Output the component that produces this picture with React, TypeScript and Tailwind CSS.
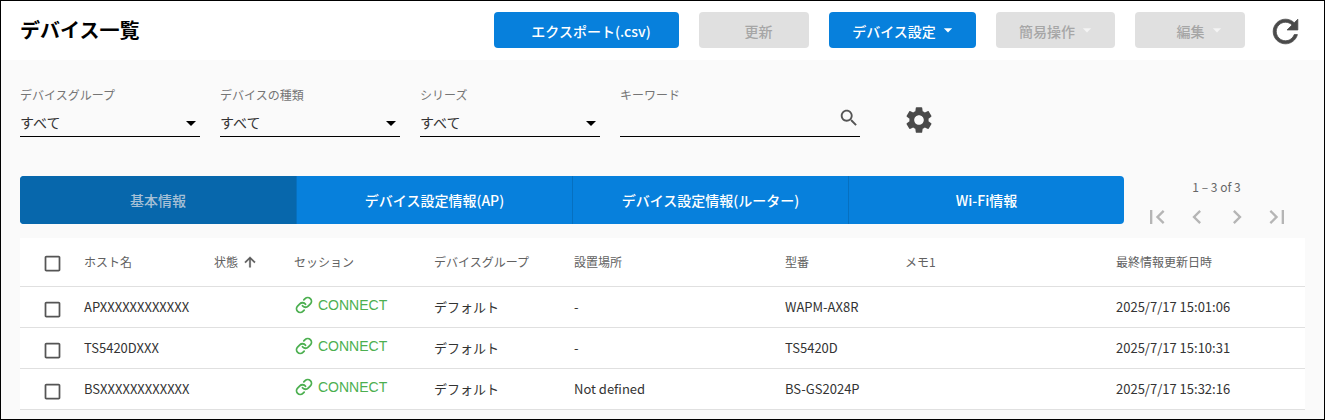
const FONT = "font-['Noto_Sans_CJK_JP','Noto_Sans',sans-serif]";

function I({ d, className, sw }: { d: string; className?: string; sw?: number }) {
  return (
    <svg viewBox="0 0 24 24" fill="currentColor" stroke={sw ? "currentColor" : "none"} strokeWidth={sw} className={className}>
      <path d={d} />
    </svg>
  );
}

const P = {
  drop: "M7 10l5 5 5-5z",
  refresh:
    "M17.65 6.35C16.2 4.9 14.21 4 12 4c-4.42 0-7.99 3.58-7.99 8s3.57 8 7.99 8c3.73 0 6.84-2.55 7.73-6h-2.08c-.82 2.33-3.04 4-5.65 4-3.31 0-6-2.69-6-6s2.69-6 6-6c1.66 0 3.14.69 4.22 1.78L13 11h7V4l-2.35 2.35z",
  search:
    "M15.5 14h-.79l-.28-.27C15.41 12.59 16 11.11 16 9.5 16 5.91 13.09 3 9.5 3S3 5.91 3 9.5 5.91 16 9.5 16c1.61 0 3.09-.59 4.23-1.57l.27.28v.79l5 4.99L20.49 19l-4.99-5zm-6 0C7.01 14 5 11.99 5 9.5S7.01 5 9.5 5 14 7.01 14 9.5 11.99 14 9.5 14z",
  gear:
    "M19.14 12.94c.04-.3.06-.61.06-.94 0-.32-.02-.64-.07-.94l2.03-1.58c.18-.14.23-.41.12-.61l-1.92-3.32c-.12-.22-.37-.29-.59-.22l-2.39.96c-.5-.38-1.03-.7-1.62-.94l-.36-2.54c-.04-.24-.24-.41-.48-.41h-3.84c-.24 0-.43.17-.47.41l-.36 2.54c-.59.24-1.13.57-1.62.94l-2.39-.96c-.22-.08-.47 0-.59.22L2.74 8.87c-.12.21-.08.47.12.61l2.03 1.58c-.05.3-.09.63-.09.94s.02.64.07.94l-2.03 1.58c-.18.14-.23.41-.12.61l1.92 3.32c.12.22.37.29.59.22l2.39-.96c.5.38 1.03.7 1.62.94l.36 2.54c.05.24.24.41.48.41h3.84c.24 0 .44-.17.47-.41l.36-2.54c.59-.24 1.13-.56 1.62-.94l2.39.96c.22.08.47 0 .59-.22l1.92-3.32c.12-.22.07-.47-.12-.61l-2.01-1.58zM12 15.6c-1.98 0-3.6-1.62-3.6-3.6s1.62-3.6 3.6-3.6 3.6 1.62 3.6 3.6-1.62 3.6-3.6 3.6z",
  box: "M19 5v14H5V5h14m0-2H5c-1.1 0-2 .9-2 2v14c0 1.1.9 2 2 2h14c1.1 0 2-.9 2-2V5c0-1.1-.9-2-2-2z",
  up: "M4 12l1.41 1.41L11 7.83V20h2V7.83l5.58 5.59L20 12l-8-8-8 8z",
  first: "M18.41 16.59L13.82 12l4.59-4.59L17 6l-6 6 6 6zM6 6h2v12H6z",
  prev: "M15.41 7.41L14 6l-6 6 6 6 1.41-1.41L10.83 12z",
  next: "M10 6L8.59 7.41 13.17 12l-4.58 4.59L10 18l6-6z",
  last: "M5.59 7.41L10.18 12l-4.59 4.59L7 18l6-6-6-6zM16 6h2v12h-2z",
};

function Btn({ label, w, on, caret }: { label: string; w: string; on?: boolean; caret?: boolean }) {
  return (
    <div
      className={`h-9 rounded flex items-center justify-center text-sm font-medium ${w} ${
        on ? "bg-[#0780dc] text-white" : "bg-[#e0e0e0] text-[#a6a6a6]"
      }`}
    >
      <span className="pt-[2px]">{label}</span>
      {caret && <I d={P.drop} className={`w-5 h-5 ml-[2px] ${on ? "text-white" : "text-[#f5f5f5]"}`} />}
    </div>
  );
}

function Select({ label }: { label: string }) {
  return (
    <div className="w-[180px] border-b border-black h-[50px] flex flex-col">
      <div className="text-xs text-[#757575] leading-[16px] h-[22px]">{label}</div>
      <div className="flex items-center justify-between flex-1">
        <span className="text-sm text-[#333] mb-[2px]">すべて</span>
        <I d={P.drop} className="w-6 h-6 text-black -mr-[3px]" />
      </div>
    </div>
  );
}

const GRID =
  "grid grid-cols-[64px_130px_80px_140px_140px_211px_120px_211px_1fr] items-center border-b border-[#e0e0e0]";

function Check({ head }: { head?: boolean }) {
  return (
    <div className={`flex justify-start pl-[21.5px] ${head ? "mt-[2px]" : "mt-[4px]"}`}>
      <I d={P.box} className="w-[21px] h-[21px] text-[#555]" />
    </div>
  );
}

function Connect() {
  return (
    <div className="flex items-center gap-[5px] text-sm text-[#4caf50] -mt-[4px] ml-[1px] font-['Liberation_Sans',sans-serif]">
      <svg viewBox="0 0 24 24" fill="none" stroke="currentColor" strokeWidth="2.4" strokeLinecap="round" strokeLinejoin="round" className="w-[18px] h-[18px]">
        <path d="M10 13a5 5 0 0 0 7.54.54l3-3a5 5 0 0 0-7.07-7.07l-1.72 1.71" />
        <path d="M14 11a5 5 0 0 0-7.54-.54l-3 3a5 5 0 0 0 7.07 7.07l1.71-1.71" />
      </svg>
      <span>CONNECT</span>
    </div>
  );
}

const rows = [
  ["APXXXXXXXXXXXX", "-", "WAPM-AX8R", "2025/7/17 15:01:06"],
  ["TS5420DXXX", "-", "TS5420D", "2025/7/17 15:10:31"],
  ["BSXXXXXXXXXXXX", "Not defined", "BS-GS2024P", "2025/7/17 15:32:16"],
];

export default function App() {
  return (
    <div className={`${FONT} w-[1325px] h-[420px] border border-black bg-[#fafafa] overflow-hidden flex flex-col`}>
      <header className="h-[59px] bg-white flex items-center pl-[19px] shrink-0">
        <h1 className="text-xl font-bold text-black mr-auto -mt-[1px]">デバイス一覧</h1>
        <div className="flex items-center gap-5 -mt-[1px]">
          <Btn label="エクスポート(.csv)" w="w-[185px] pl-[9px]" on />
          <Btn label="更新" w="w-[110px] pl-[9px]" />
          <Btn label="デバイス設定" w="w-[147px] pl-[5px]" on caret />
          <Btn label="簡易操作" w="w-[119px] pl-[5px]" caret />
          <Btn label="編集" w="w-[110px] pl-[23px]" caret />
          <div className="w-[59px] flex justify-start pl-[2px] mt-[3px]">
            <I d={P.refresh} sw={0.5} className="w-[37px] h-[37px] text-[#4a4a4a]" />
          </div>
        </div>
      </header>

      <section className="flex items-start pl-[19px] pt-[27px] gap-5 h-[116px] shrink-0">
        <Select label="デバイスグループ" />
        <Select label="デバイスの種類" />
        <Select label="シリーズ" />
        <div className="w-[240px] border-b border-black h-[50px] flex flex-col">
          <div className="text-xs text-[#757575] leading-[16px] h-[22px]">キーワード</div>
          <div className="flex justify-end flex-1">
            <I d={P.search} className="w-[22px] h-[22px] text-[#555] -mt-[2px]" />
          </div>
        </div>
        <I d={P.gear} className="w-[32px] h-[32px] text-[#4a4a4a] ml-[23px] mt-[17px]" />
      </section>

      <section className="flex pl-[19px] shrink-0 h-[62px]">
        <div className="w-[1104px] h-[48px] rounded bg-[#0780dc] grid grid-cols-4 overflow-hidden text-sm font-medium text-white">
          <div className="flex items-center justify-center bg-[#0767ac] text-[#a6c0d6]">基本情報</div>
          <div className="flex items-center justify-center border-l border-[#0670c0]">デバイス設定情報(AP)</div>
          <div className="flex items-center justify-center border-l border-[#0670c0]">デバイス設定情報(ルーター)</div>
          <div className="flex items-center justify-center border-l border-[#0670c0]">Wi-Fi情報</div>
        </div>
        <div className="w-[160px] ml-[12px] flex flex-col items-center text-[#b5b5b5]">
          <div className="text-xs leading-[22px] text-[#666] ml-[1px]">1 – 3 of 3</div>
          <div className="grid grid-cols-4 gap-3 mt-[5px] ml-[2px]">
            <I d={P.first} className="w-7 h-7" />
            <I d={P.prev} className="w-7 h-7" />
            <I d={P.next} className="w-7 h-7" />
            <I d={P.last} className="w-7 h-7" />
          </div>
        </div>
      </section>

      <section className="w-[1285px] ml-[19px] bg-white">
        <div className={`${GRID} h-[49px] text-xs text-[#616161]`}>
          <Check head />
          <div>ホスト名</div>
          <div className="flex items-center gap-[4px] -mt-[1px]">
            状態 <I d={P.up} sw={0.6} className="w-4 h-4 text-[#555]" />
          </div>
          <div>セッション</div>
          <div>デバイスグループ</div>
          <div>設置場所</div>
          <div>型番</div>
          <div>メモ1</div>
          <div>最終情報更新日時</div>
        </div>
        {rows.map((r) => (
          <div key={r[0]} className={`${GRID} h-[41px] text-[13px] text-[#333]`}>
            <Check />
            <div>{r[0]}</div>
            <div />
            <Connect />
            <div>デフォルト</div>
            <div>{r[1]}</div>
            <div>{r[2]}</div>
            <div />
            <div>{r[3]}</div>
          </div>
        ))}
      </section>
    </div>
  );
}
